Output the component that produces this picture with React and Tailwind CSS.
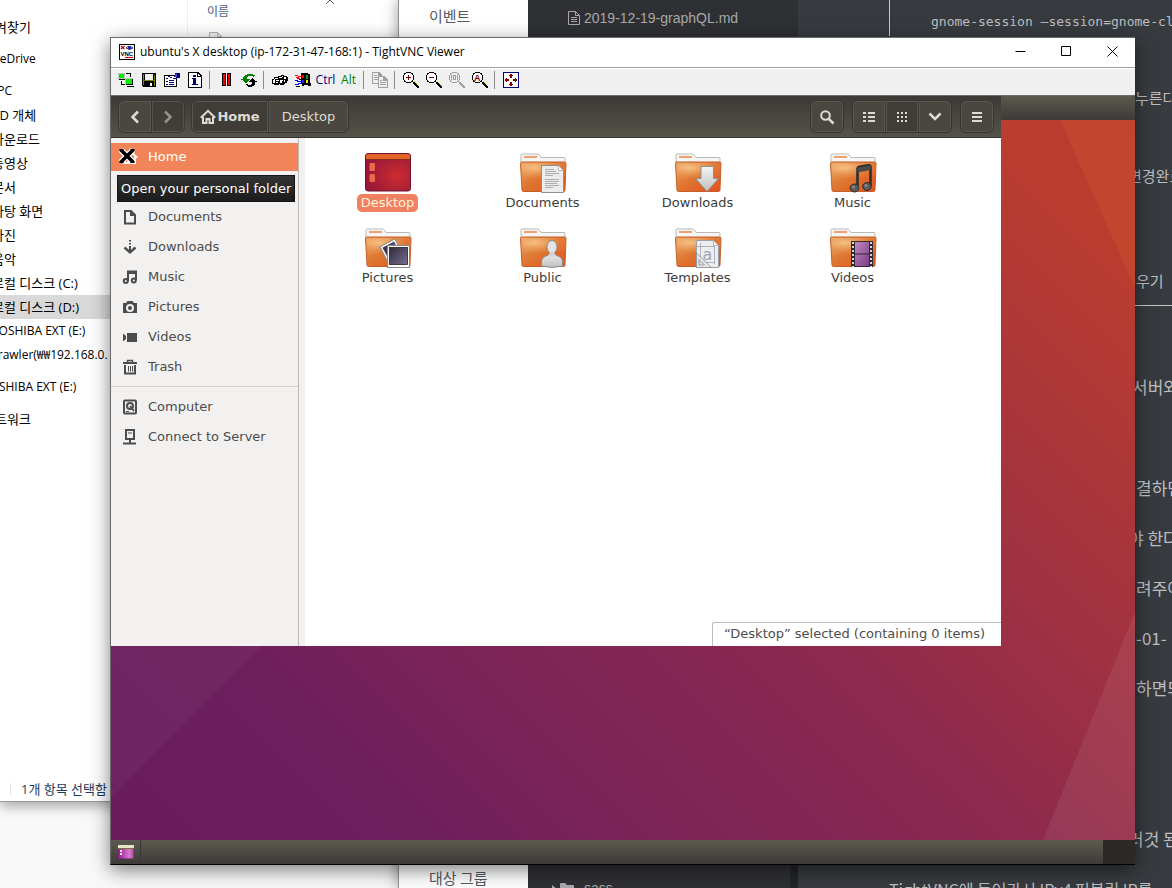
import React from "react";

const WIN = "font-['Open_Sans','Noto_Sans_CJK_KR',sans-serif]";
const KR = "font-['Noto_Sans_CJK_KR',sans-serif]";
const GTK = "font-['DejaVu_Sans',sans-serif]";

/* ---------- toolbar icons, 16x16 pixel style ---------- */

function Pix({ children, size = 16 }) {
  return (
    <svg width={size} height={size} viewBox="0 0 16 16" shapeRendering="crispEdges" aria-hidden="true">
      {children}
    </svg>
  );
}

const VncLogo = () => (
  <svg width="16" height="16" viewBox="0 0 16 16" aria-hidden="true">
    <rect x=".5" y=".5" width="15" height="15" fill="#fff" stroke="#000" />
    <path d="M2 2l3.5 3M5.5 2L2 5" stroke="#c00000" strokeWidth="1.2" />
    <path d="M7 4q3-3.500 7 0q-3.500 3-7 0z" fill="#fff" stroke="#000" strokeWidth=".8" />
    <circle cx="10.500" cy="3.800" r="1.600" fill="#0018c8" />
    <text x="1.500" y="12" fontSize="6" fontWeight="700" fontFamily="Liberation Sans" fill="#000">VNC</text>
    <path d="M6 13.500h8" stroke="#e00000" strokeWidth="1.200" />
  </svg>
);

const ConnectIcon = () => (
  <Pix>
    <path d="M0 1h7v6H0z" fill="#c0c0c0" />
    <path d="M1 2h5v4H1zM8 7h6v5H8z" fill="#00f000" />
    <path d="M8 1h5v1H8zM12 2h1v3h-1zM3 9h1v4H3zM4 12h3v1H4zM1 7h6v1H1z" fill="#000" />
    <path d="M7 6h8v1H7zM7 7h1v6H7z" fill="#c0c0c0" />
    <path d="M14 7h1v6h-1zM8 12h6v1H8zM9 14h7v1H9z" fill="#000" />
  </Pix>
);
const SaveIcon = () => (
  <Pix>
    <path d="M1 1h14v14H2l-1-1z" fill="#000" />
    <path d="M2 2h1v11H2zM13 3h1v11h-1zM3 8h10v1H3z" fill="#808000" />
    <path d="M4 2h8v6H4z" fill="#efefef" />
    <path d="M9 11h2v3H9z" fill="#fff" />
  </Pix>
);
const PropsIcon = () => (
  <Pix>
    <path d="M0 3h13v12H0z" fill="#000" />
    <path d="M1 4h11v10H1z" fill="#fff" />
    <path d="M2 6h2v1H2zM2 9h2v1H2zM2 12h2v1H2zM5 8h5v1H5zM5 10h5v1H5zM5 12h5v1H5z" fill="#00007f" />
    <path d="M4 4h5v-1h2V1h5v5h-3v1H9V6H6V5H4z" fill="#00007f" />
    <path d="M6 4h4v1H6zM8 5h4v1H8z" fill="#fff" />
    <path d="M11 2h2v3h-2z" fill="#4a4ab0" />
  </Pix>
);
const InfoIcon = () => (
  <Pix>
    <path d="M1 0h10l4 4v12H1z" fill="#000" />
    <path d="M2 1h8v4h4v10H2z" fill="#fff" />
    <path d="M11 2v2h2z" fill="#fff" />
    <path d="M6 3h3v2H6zM5 6h4v6h2v1H5v-1h1V7H5z" fill="#00007f" />
  </Pix>
);
const PauseIcon = () => (
  <Pix>
    <path d="M4 1h4v13H4zM9 1h4v13H9z" fill="#000" />
    <path d="M5 2h2v11H5zM10 2h2v11h-2z" fill="#f00" />
  </Pix>
);
const RefreshIcon = () => (
  <Pix>
    <path d="M0 7h2V5h1V4h1V3h2V2h6v1h2v1h-1v1h-1V4H7v1H6v2h3v1H8v1H7v1H6v1H4v-1H3V9H2V8H0z" fill="#008000" />
    <path d="M16 9h-2V8h-1V7h-1V6h-1v1h-1v1H9v1H8v1h3v2h-1v1H7v-1H5v1h1v1h1v1h4v-1h2v-1h1v-3h2z" fill="#000" />
  </Pix>
);
const BinocularsIcon = () => (
  <Pix>
    <path d="M2 5h4V4h3V3h3v1h3v1h1v4h-1v2h-2v1h-1v1H8v-1H7v1H2v-1H0V7h2z" fill="#000" />
    <path d="M3 6h3v1H3zM2 7h1v1H2zM1 8h2v3H1zM4 8h3v1H4zM4 10h2v1H4zM7 5h3v1H7zM8 8h3v1H8zM8 9h2v2H8zM12 8h1v2h-1zM12 5h2v2h-2zM10 4h1v1h-1z" fill="#fff" />
  </Pix>
);
const FlagIcon = () => (
  <Pix>
    <path d="M6 1h7v1h2v9h1v3h-3v-1H9v1H7v-2H6z" fill="#000" />
    <path d="M0 3h3v1H0zM1 5h3v1H1zM3 4h4v1H3z" fill="#f00" />
    <path d="M0 8h3v1H0zM2 9h4v1H2zM0 12h4v1H0zM3 11h3v1H3z" fill="#00f" />
    <path d="M2 6h3v1H2zM7 3h2v3H7z" fill="#f00" />
    <path d="M11 3h2v4h-2z" fill="#00a000" />
    <path d="M7 8h2v3H7z" fill="#2020ff" />
    <path d="M11 8h2v3h-2z" fill="#f8e000" />
    <path d="M1 14h4v1H1zM4 7h2v1H4z" fill="#000" />
  </Pix>
);
const CopyIcon = () => (
  <Pix>
    <path d="M0 0h7l3 3v9H0z" fill="#a0a0a0" />
    <path d="M1 1h5v3h3v7H1z" fill="#efefef" />
    <path d="M2 3h3v1H2zM2 5h5v1H2zM2 7h4v1H2z" fill="#a0a0a0" />
    <path d="M6 4h6l4 4v8H6z" fill="#a0a0a0" />
    <path d="M7 5h4v4h4v6H7z" fill="#efefef" />
    <path d="M8 8h2v1H8zM8 10h6v1H8zM8 12h6v1H8z" fill="#a0a0a0" />
  </Pix>
);

function Magnifier({ gray = false, children }) {
  const edge = gray ? "#a0a0a0" : "#000";
  return (
    <Pix>
      <path d="M3 0h5v1H3zM1 1h2v2H1zM8 1h2v2H8zM0 3h1v5H0zM10 3h1v5h-1zM1 8h2v2H1zM3 10h5v1H3zM8 8h2v2H8z" fill={edge} />
      <path d="M3 1h5v1h1v1h1v5H9v1H8v1H3V9H2V8H1V3h1V2h1z" fill={gray ? "#efefef" : "#fff"} />
      <path d="M10 10h2v1h1v1h1v1h1v1h1v2h-2v-1h-1v-1h-1v-1h-1v-1h-1z" fill={edge} />
      {!gray && <path d="M11 9h1v1h1v1h-1v-1h-1zM13 11h1v1h-1z" fill="#e8e000" />}
      {children}
    </Pix>
  );
}
const ZoomInIcon = () => (
  <Magnifier><path d="M3 5h5v1H3zM5 3h1v5H5z" fill="#800000" /></Magnifier>
);
const ZoomOutIcon = () => (
  <Magnifier><path d="M3 5h5v1H3z" fill="#800000" /></Magnifier>
);
const ZoomFullIcon = () => (
  <Magnifier gray>
    <path d="M2 3h1v5H2zM4 3h3v1H4zM4 7h3v1H4zM4 3h1v5H4zM6 3h1v5H6zM8 3h1v5H8z" fill="#a0a0a0" />
  </Magnifier>
);
const ZoomAutoIcon = () => (
  <Magnifier>
    <text x="2" y="9" fontSize="9" fontWeight="700" fontFamily="Liberation Sans" fill="#800000">A</text>
  </Magnifier>
);
const FullscreenIcon = () => (
  <Pix>
    <rect x=".5" y=".5" width="15" height="15" fill="#fff" stroke="#000080" />
    <path d="M7 2h2v1h1v1H9v2H7V4H6V3h1zM7 14h2v-1h1v-1H9v-2H7v2H6v1h1zM2 7v2h1v1h1V9h2V7H4V6H3v1zM14 7v2h-1v1h-1V9h-2V7h2V6h1v1z" fill="#800000" />
  </Pix>
);

const TOOLS = [
  ["New connection", <ConnectIcon />],
  ["Save session", <SaveIcon />],
  ["Connection options", <PropsIcon />],
  ["Connection info", <InfoIcon />],
  null,
  ["Pause", <PauseIcon />],
  ["Refresh", <RefreshIcon />],
  null,
  ["Send Ctrl-Alt-Del", <BinocularsIcon />],
  ["Send Win key", <FlagIcon />],
  ["Ctrl", <span className="text-[#00007f]">Ctrl</span>],
  ["Alt", <span className="text-[#008000]">Alt</span>],
  null,
  ["Transfer files", <CopyIcon />],
  null,
  ["Zoom in", <ZoomInIcon />],
  ["Zoom out", <ZoomOutIcon />],
  ["Zoom 100%", <ZoomFullIcon />],
  ["Zoom auto", <ZoomAutoIcon />],
  null,
  ["Full screen", <FullscreenIcon />],
];

/* ---------- sidebar symbols ---------- */

function Sym({ children }) {
  return (
    <svg width="16" height="16" viewBox="0 0 16 16" fill="none" stroke="currentColor" strokeWidth="2" className="shrink-0" aria-hidden="true">
      {children}
    </svg>
  );
}
const HomeSym = () => (
  <Sym>
    <path d="M.8 8.700L8 1.800l7.200 6.900" />
    <path d="M3 8v6h3.500v-4h3v4H13V8" />
  </Sym>
);
/* A null entry keeps the row that the tooltip lies over. */
const PLACES = [
  ["Home", <HomeSym />],
  null,
  ["Documents", <Sym><path d="M3 2h6l4 4v8.500H3z" /><path d="M8 2v5h5z" fill="currentColor" stroke="none" /></Sym>],
  ["Downloads", <Sym><path d="M8 1v1.500M8 4v1.500M8 7v6" /><path d="M2.500 8.500L8 13.300l5.500-4.800" strokeWidth="2.400" /></Sym>],
  ["Music", (
    <Sym>
      <path d="M6 12V2.500h8V11" />
      <path d="M6 4h8" />
      <circle cx="3.800" cy="12" r="2" />
      <circle cx="11.800" cy="11.500" r="2" />
    </Sym>
  )],
  ["Pictures", (
    <Sym>
      <path fillRule="evenodd" d="M1 4h3l1.500-2h5L12 4h3v10H1zM8 5a4 4 0 100 8 4 4 0 000-8z" fill="currentColor" stroke="none" />
      <circle cx="8" cy="9" r="2" fill="currentColor" stroke="none" />
    </Sym>
  )],
  ["Videos", <Sym><path d="M5 4h10v9H5zM1 4.500L4 7v3l-3 2.500z" fill="currentColor" stroke="none" /></Sym>],
  ["Trash", (
    <Sym>
      <path d="M1 4h14" />
      <path d="M5.500 3V1.500h5V3" strokeWidth="1.400" />
      <path d="M3 6v8.500h10V6" />
      <path d="M6.500 7v5.500M8.500 7v5.500M10.500 7v5.500" strokeWidth="1" />
    </Sym>
  )],
];
const DEVICES = [
  ["Computer", (
    <Sym>
      <rect x="2" y="1.500" width="12" height="13" rx="1" />
      <circle cx="8" cy="7" r="3" />
      <path d="M8 7l4 5" />
      <path d="M4 12.500h3" strokeWidth="1" />
    </Sym>
  )],
  ["Connect to Server", (
    <Sym>
      <path d="M4 1h8v9H4z" />
      <path d="M6 4h4" strokeWidth="1" />
      <path d="M8 10v4M1 14.500h13" />
    </Sym>
  )],
];

/* ---------- folder icons, 48x42 ---------- */

function Folder({ children }) {
  return (
    <svg width="48" height="42" viewBox="0 0 48 42" aria-hidden="true">
      <path d="M2 14V4q0-1 1-1h15.500q1 0 1.500.8l2 2.700H45q1 0 1 1V14z" fill="#f6f6f4" stroke="#b9b9b7" />
      <path d="M5 5h13v2H5z" fill="#f0a070" />
      <path d="M1.500 12.500q0-1.500 1.500-1.500h42.500q1.500 0 1.500 1.500L46 39q0 1.500-1.500 1.500h-40Q3 40.500 3 39z" fill="url(#folderBody)" stroke="#c4602c" />
      <path d="M2.500 12h44l-.4 12Q24 27 3 28z" fill="url(#folderGlow)" />
      {children}
    </svg>
  );
}
const Defs = () => (
  <svg width="0" height="0" className="absolute" aria-hidden="true">
    <defs>
      <linearGradient id="folderBody" x1="0" y1="0" x2="1" y2="1">
        <stop offset="0" stopColor="#e9a05c" />
        <stop offset=".5" stopColor="#de7430" />
        <stop offset="1" stopColor="#e4501c" />
      </linearGradient>
      <radialGradient id="folderGlow" cx=".3" cy=".3" r=".6">
        <stop offset="0" stopColor="#fbd9a0" stopOpacity=".7" />
        <stop offset="1" stopColor="#f6b070" stopOpacity=".1" />
      </radialGradient>
      <linearGradient id="metal" x1="0" y1="0" x2="0" y2="1">
        <stop offset="0" stopColor="#f4f4f4" />
        <stop offset="1" stopColor="#c0c0c0" />
      </linearGradient>
      <radialGradient id="deskRed" cx=".7" cy=".6" r=".7">
        <stop offset="0" stopColor="#cc2c30" />
        <stop offset="1" stopColor="#961838" />
      </radialGradient>
      <linearGradient id="photo" x1="0" y1="0" x2="1" y2="1">
        <stop offset="0" stopColor="#2e2a3c" />
        <stop offset="1" stopColor="#7a6e90" />
      </linearGradient>
      <linearGradient id="film" x1="0" y1="0" x2="1" y2="1">
        <stop offset="0" stopColor="#c088c0" />
        <stop offset="1" stopColor="#7c3c88" />
      </linearGradient>
      <linearGradient id="mini" x1="0" y1="0" x2="1" y2="0">
        <stop offset="0" stopColor="#8c2090" />
        <stop offset=".7" stopColor="#d878c8" />
        <stop offset="1" stopColor="#b048a8" />
      </linearGradient>
    </defs>
  </svg>
);

const ITEMS = [
  ["Desktop", (
    <svg width="48" height="42" viewBox="0 0 48 42" aria-hidden="true">
      <rect x="1.500" y="2.500" width="45" height="37.500" rx="2.500" fill="url(#deskRed)" stroke="#6e1230" />
      <path d="M2 8V5q0-2 2-2h40q2 0 2 2v3z" fill="#df6426" />
      <path d="M2 8.500h44" stroke="#8c2a20" />
      <rect x="5.500" y="12" width="5.500" height="8" rx="1" fill="#ea6a48" />
      <rect x="5.500" y="23" width="5.500" height="8" rx="1" fill="#ea6a48" />
    </svg>
  )],
  ["Documents", (
    <Folder>
      <path d="M22.500 14.500h17l5 5v22h-22z" fill="#ececec" stroke="#8e8e8e" />
      <path d="M39.500 14.500v5h5z" fill="#fff" stroke="#a0a0a0" strokeWidth=".7" />
      <path d="M26 18.500h9M26 20.500h11M26 22.500h14M26 24.500h8M26 28.500h14M26 30.500h14M26 32.500h12M26 34.500h14M26 36.500h8" stroke="#9c9c9c" strokeWidth=".8" />
    </Folder>
  )],
  ["Downloads", (
    <Folder>
      <path d="M27 15.500h12.500v12h5L33 40.500 21.500 27.500H27z" fill="url(#metal)" stroke="#8e8e8e" />
    </Folder>
  )],
  ["Music", (
    <Folder>
      <path d="M28.500 37V18q0-2 2-2.300l9-1.500q2-.2 2 1.500V35" fill="none" stroke="#2f2f2f" strokeWidth="2.600" />
      <path d="M28.500 21.500l13-2.500v-4.500l-13 2z" fill="#4a4a4a" />
      <ellipse cx="25.500" cy="37" rx="4.300" ry="4" fill="#5a5a5a" stroke="#2c2c2c" />
      <ellipse cx="38" cy="35.500" rx="4.300" ry="4" fill="#5a5a5a" stroke="#2c2c2c" />
      <circle cx="24.500" cy="36" r="1.500" fill="#8c8c8c" />
      <circle cx="37" cy="34.500" r="1.500" fill="#8c8c8c" />
    </Folder>
  )],
  ["Pictures", (
    <Folder>
      <g transform="rotate(-28 26 24)">
        <rect x="18.500" y="16.500" width="17" height="17" fill="#f4f4f4" stroke="#888" />
        <rect x="20.500" y="18.500" width="13" height="12" fill="url(#photo)" />
      </g>
      <rect x="23.500" y="19.500" width="22" height="22" fill="#fafafa" stroke="#888" />
      <rect x="25.500" y="21.500" width="18" height="17" fill="url(#photo)" stroke="#222" strokeWidth=".8" />
    </Folder>
  )],
  ["Public", (
    <Folder>
      <path d="M22.500 40v-4q0-5 6-6.500l2-1.500v-3h5v3l2 1.500q6 1.500 6 6.500v4q-10.500 3-21 0z" fill="url(#metal)" stroke="#8e8e8e" />
      <ellipse cx="33" cy="21" rx="5" ry="6.500" fill="#e4e4e4" stroke="#8e8e8e" />
      <path d="M30.500 26.500h5v4h-5z" fill="#d4d4d4" />
    </Folder>
  )],
  ["Templates", (
    <Folder>
      <path d="M22.500 14.500h17l5 5v22h-22z" fill="#eceef0" stroke="#9aa0a4" />
      <path d="M39.500 14.500v5h5z" fill="#fff" stroke="#a0a0a0" strokeWidth=".7" />
      <path d="M23 20.500h17M23 36.500h17M26.500 17v23M40.500 20v18" stroke="#9ea2b0" strokeWidth=".8" />
      <text x="28.500" y="34" fontSize="16" fontFamily="DejaVu Sans" fill="#a2a6b2">a</text>
      <path d="M22.500 27l15 14.500h-15z" fill="#e2e4e6" fillOpacity=".8" stroke="#8e9296" strokeWidth=".8" />
      <path d="M25 33.500v5.500h5.500z" fill="none" stroke="#8e9296" strokeWidth=".8" />
    </Folder>
  )],
  ["Videos", (
    <Folder>
      <path d="M22 15h22v26H22z" fill="#2e2a30" />
      <path d="M26 16h14v11.500H26zM26 28.500h14V40H26z" fill="url(#film)" />
      <path d="M24 16v25M42 16v25" stroke="#d8d0d8" strokeWidth="2" strokeDasharray="2 2" />
    </Folder>
  )],
];

/* ---------- background windows ---------- */

const NAV_GROUPS = [
  [["즐겨찾기", 0]],
  [["OneDrive", 0]],
  [
    ["내 PC", 0], ["3D 개체", 1], ["다운로드", 1], ["동영상", 1], ["문서", 1], ["바탕 화면", 1],
    ["사진", 1], ["음악", 1], ["로컬 디스크 (C:)", 1], ["로컬 디스크 (D:)", 1, true],
    ["TOSHIBA EXT (E:)", 1], ["crawler(₩₩192.168.0.", 1],
  ],
  [["TOSHIBA EXT (E:)", 0]],
  [["네트워크", 0]],
];
const isLatin = (label) => /[A-Z]{2}|[a-z]{2}/.test(label);

function Explorer() {
  return (
    <div className="flex w-[398px] shrink-0 flex-col bg-[#f9f9f9] pb-[86px]">
      <div className={`relative flex min-h-0 flex-1 flex-col border-b border-[#9a9a9a] bg-white text-[12px] leading-6 text-black shadow-[0_4px_12px_rgba(0,0,0,0.35)] ${WIN}`}>
        <div className="flex min-h-0 flex-1">
          <nav className="w-[188px] overflow-hidden border-r border-[#f0f0f0] pt-[15px]">
            {NAV_GROUPS.map((group, g) => (
              <ul key={g} className="mb-2">
                {group.map(([label, level, active]) => (
                  <li key={label} className={active ? "bg-[#d9d9d9]" : ""}>
                    <a href="#" className={`block h-6 whitespace-nowrap ${level ? "-ml-2" : "-ml-[17px]"} ${isLatin(label) ? "text-[12px]" : "text-[13px]"}`}>{label}</a>
                  </li>
                ))}
              </ul>
            ))}
          </nav>
          <div className="flex-1 pl-[19px] text-[#4c607a]">
            <div className="flex items-start justify-between pr-[63px]">
              <span>이름</span>
              <svg width="10" height="5" viewBox="0 0 10 5" fill="none" stroke="#555" aria-hidden="true"><path d="M1 0l4 4 4-4" transform="matrix(1 0 0 -1 0 4)" /></svg>
            </div>
            <svg width="13" height="16" viewBox="0 0 13 16" fill="#f4f4f4" stroke="#b0b0b0" className="mt-2 ml-[2px]" aria-hidden="true">
              <path d="M.5.5h8l4 4v11H.5zM8.500.5v4h4" />
            </svg>
          </div>
        </div>
        <div className="flex h-6 items-center pl-[10px] text-[13px] text-[#1e395b]">
          <span className="h-3 border-l border-[#e4e4e4] pl-[10px]" />
          1개 항목 선택함
        </div>
      </div>
    </div>
  );
}

function Console() {
  return (
    <div className={`z-10 flex w-[130px] shrink-0 flex-col justify-between border-l border-[#909090] bg-white pt-1 pl-[30px] text-[15px] leading-6 text-[#545b64] shadow-[0_0_14px_rgba(0,0,0,0.4)] ${KR}`}>
      <span>이벤트</span>
      <span className="-mb-[2px]">대상 그룹</span>
    </div>
  );
}

function FileTree() {
  return (
    <div className="z-10 flex w-[270px] shrink-0 flex-col justify-between overflow-hidden bg-[#2f3034] font-['Liberation_Sans',sans-serif] text-[14px] leading-6 text-[#a9a9a9]">
      <div className="flex items-center gap-1 pt-[6px] pl-10">
        <svg width="12" height="14" viewBox="0 0 12 14" fill="none" stroke="#a9a9a9" aria-hidden="true">
          <path d="M.5.5h7l4 4v9H.5zM7.500.5v4h4M3 6.500h6M3 8.500h6M3 10.500h6" />
        </svg>
        2019-12-19-graphQL.md
      </div>
      <div className="-mb-3 flex h-9 items-center border-r-8 border-[#232426] pt-3 pl-6">
        <svg width="22" height="13" viewBox="0 0 22 13" fill="#a9a9a9" className="mr-[10px]" aria-hidden="true">
          <path d="M0 3l5 4-5 4zM8 2q0-1 1-1h4l2 2h6q1 0 1 1v9H8z" />
        </svg>
        sass
      </div>
    </div>
  );
}

const NOTES = [
  ["누른다.", "mt-[37px] -ml-[1px] text-[15px]"],
  ["변경완료", "mt-7 -ml-2 text-[15px]"],
  ["우기", "mt-[55px] text-[15px]"],
];
const NOTES_2 = [
  ["서버와", "mt-14 -ml-1"],
  ["결하면", "mt-[51px]"],
  ["야 한다", "-ml-2"],
  ["려주어", ""],
  ["-01-", ""],
  ["하면되", ""],
  ["러것 된", "mt-[101px] -ml-2"],
];

function Notes() {
  return (
    <div className={`min-w-0 flex-1 overflow-hidden bg-[#373b3f] leading-[50px] whitespace-nowrap text-[#bcbec0] ${KR}`}>
      <pre className="ml-[91px] h-9 border-l border-[#c8c8c8] pt-3 pl-[41px] font-['DejaVu_Sans_Mono','Noto_Sans_CJK_KR',monospace] text-[13px] leading-5">gnome-session –session=gnome-classic &amp;</pre>
      <div className="ml-auto w-9">
        {NOTES.map(([text, cls]) => <p key={text} className={`h-[50px] ${cls}`}>{text}</p>)}
      </div>
      <hr className="-mt-px ml-[91px] border-[#c8c8c8]" />
      <div className="ml-auto w-9 text-[17px]">
        {NOTES_2.map(([text, cls]) => <p key={text} className={`h-[50px] ${cls}`}>{text}</p>)}
      </div>
      <p className="ml-[91px] text-[16px]">TightVNC에 들어가서 IPv4 퍼블릭 IP를</p>
    </div>
  );
}

/* ---------- remote desktop ---------- */

const HDR_BTN = "flex h-[33px] items-center justify-center border border-[#383632] text-[#dfdbd2] shadow-[inset_0_0_0_1px_#5a574f]";

function HeaderBar() {
  return (
    <header className="flex h-[42px] shrink-0 items-center border-b border-[#35332f] bg-linear-to-b from-[#3d3936] to-[#55524a] px-[7px] text-[13px]">
      <div className="flex">
        <button aria-label="Back" className={`w-[34px] rounded-l-md bg-[#4a4741] ${HDR_BTN}`}>
          <svg width="10" height="14" viewBox="0 0 10 14" fill="none" stroke="currentColor" strokeWidth="2.500"><path d="M8 1.500L2.500 7 8 12.500" /></svg>
        </button>
        <button aria-label="Forward" className={`-ml-px w-[34px] rounded-r-md bg-[#3f3c37] opacity-80 ${HDR_BTN}`}>
          <svg width="10" height="14" viewBox="0 0 10 14" fill="none" stroke="#a8a49c" strokeWidth="2.500"><path d="M2 1.500L7.500 7 2 12.500" /></svg>
        </button>
      </div>
      <div className="ml-[6px] flex">
        <button className={`w-[78px] gap-px rounded-l-md bg-[#403d38] font-bold ${HDR_BTN}`}><HomeSym />Home</button>
        <button className={`-ml-px w-[81px] rounded-r-md bg-[#4a4741] ${HDR_BTN}`}>Desktop</button>
      </div>
      <div className="ml-auto flex">
        <button aria-label="Search" className={`w-[34px] rounded-md bg-[#4a4741] ${HDR_BTN}`}>
          <svg width="16" height="16" viewBox="0 0 16 16" fill="none" stroke="currentColor"><circle cx="6.500" cy="6.500" r="4.300" strokeWidth="2" /><path d="M9.800 9.800l4.700 4.700" strokeWidth="2.500" /></svg>
        </button>
        <button aria-label="List view" className={`ml-2 w-[34px] rounded-l-md bg-[#4a4741] ${HDR_BTN}`}>
          <svg width="12" height="12" viewBox="0 0 12 12" fill="currentColor"><path d="M0 1h3v2H0zM5 1h7v2H5zM0 5h3v2H0zM5 5h7v2H5zM0 9h3v2H0zM5 9h7v2H5z" /></svg>
        </button>
        <button aria-label="Icon view" className={`-ml-px w-[34px] bg-[#403d38] ${HDR_BTN}`}>
          <svg width="12" height="12" viewBox="0 0 12 12" fill="currentColor"><path d="M1 1h2v2H1zM5 1h2v2H5zM9 1h2v2H9zM1 5h2v2H1zM5 5h2v2H5zM9 5h2v2H9zM1 9h2v2H1zM5 9h2v2H5zM9 9h2v2H9z" /></svg>
        </button>
        <button aria-label="View options" className={`-ml-px w-[34px] rounded-r-md bg-[#4a4741] ${HDR_BTN}`}>
          <svg width="14" height="9" viewBox="0 0 14 9" fill="none" stroke="currentColor" strokeWidth="2.500"><path d="M1.500 1.500L7 7l5.500-5.500" /></svg>
        </button>
        <button aria-label="Menu" className={`ml-2 w-[34px] rounded-md bg-[#4a4741] ${HDR_BTN}`}>
          <svg width="10" height="10" viewBox="0 0 10 10" fill="currentColor"><path d="M0 0h10v2H0zM0 4h10v2H0zM0 8h10v2H0z" /></svg>
        </button>
      </div>
    </header>
  );
}

const PlaceLink = ({ label, icon, active }) => (
  <li>
    <a href="#" className={`flex h-7 items-center gap-[10px] pl-[11px] ${active ? "bg-[#f18459] text-white" : "text-[#4c4c4c]"}`}>
      {icon}
      {label}
    </a>
  </li>
);

function Nautilus() {
  return (
    <section className={`absolute top-0 right-[134px] bottom-[218px] left-0 flex flex-col bg-[#f2f1f0] ${GTK}`}>
      <HeaderBar />
      <div className="flex min-h-0 flex-1">
        <nav className="relative w-[188px] shrink-0 border-r border-[#bcbab8] pt-[5px] text-[13px]">
          <ul className="flex flex-col gap-[2px]">
            {PLACES.map((place, i) =>
              place ? (
                <PlaceLink key={place[0]} label={place[0]} icon={place[1]} active={i === 0} />
              ) : (
                <li key={i} className="h-7" />
              )
            )}
          </ul>
          <hr className="mt-[5px] mb-[6px] border-[#d4d2d0]" />
          <ul className="flex flex-col gap-[2px]">
            {DEVICES.map(([label, icon]) => <PlaceLink key={label} label={label} icon={icon} />)}
          </ul>
          <svg width="18" height="18" viewBox="0 0 18 18" className="absolute top-[9px] left-[7px]" aria-hidden="true">
            <path d="M3 3l12 12M15 3L3 15" stroke="#fff" strokeWidth="6" />
            <path d="M3 3l12 12M15 3L3 15" stroke="#000" strokeWidth="3.600" />
            <path d="M1.500 3h4M12.500 3h4M1.500 15h4M12.500 15h4" stroke="#000" strokeWidth="2" />
          </svg>
          <div role="tooltip" className="absolute top-[37px] left-[6px] flex h-[27px] items-center border border-[#151515] bg-linear-to-b from-[#343434] to-[#1c1c1c] px-[3px] whitespace-nowrap text-white">
            Open your personal folder
          </div>
        </nav>
        <main className="relative ml-[6px] min-w-0 flex-1 bg-white">
          <ul className="grid grid-cols-[repeat(auto-fill,155px)] pt-[13px] pl-[5px] text-[13px]">
            {ITEMS.map(([label, icon], i) => (
              <li key={label} className="flex h-[75px] flex-col items-center">
                {icon}
                <span className={`mt-px rounded-[5px] px-1 leading-[18px] ${i === 0 ? "bg-[#f08060] text-[#fff3d8]" : "text-[#3c3c3c]"}`}>{label}</span>
              </li>
            ))}
          </ul>
          <p className="absolute right-0 bottom-0 rounded-tl-[3px] border-t border-l border-[#bcbcbc] bg-white pr-4 pb-[2px] pl-[11px] text-[13px] leading-[21px] whitespace-nowrap text-[#4c4c4c]">
            “Desktop” selected (containing 0 items)
          </p>
        </main>
      </div>
    </section>
  );
}

function RemoteDesktop() {
  return (
    <div className="relative flex min-h-0 flex-1 flex-col">
      <div className="h-6 shrink-0 bg-linear-to-b from-[#5c594f] to-[#3d3b37]" />
      <div className="min-h-0 flex-1 bg-[linear-gradient(45deg,#681c5c_0%,#6b1f5c_16%,#7b2359_30%,#8c294e_52%,#9c3044_64%,#b03836_82%,#ba3d2e_92%,#b63b32_100%)]">
        <svg className="h-full w-full" viewBox="0 0 1024 720" preserveAspectRatio="none" aria-hidden="true">
          <path d="M949 0h75v168z" fill="#c84e30" fillOpacity=".55" />
          <path d="M1024 492v228h-92z" fill="#fff" fillOpacity=".07" />
          <path d="M0 526h151L0 678z" fill="#fff" fillOpacity=".03" />
        </svg>
      </div>
      <div className="flex h-6 shrink-0 items-center bg-linear-to-b from-[#5c594f] to-[#3d3b37]">
        <button aria-label="Show desktop" className="flex h-6 w-[30px] items-center justify-center border-r border-[#3a3834]">
          <svg width="16" height="14" viewBox="0 0 16 14" aria-hidden="true">
            <rect y="3" width="16" height="11" rx="1" fill="url(#mini)" stroke="#6a1468" />
            <path d="M0 0h16v3H0z" fill="#e8e4c4" />
            <path d="M0 3.500h16" stroke="#77703c" />
            <path d="M2 5h2v2H2zM2 8h2v2H2z" fill="#f0e0f0" />
          </svg>
        </button>
        <div className="ml-auto h-6 w-8 bg-[#2a2927]" />
      </div>
      <Nautilus />
    </div>
  );
}

function VncViewer() {
  return (
    <section className={`absolute top-[37px] right-[37px] bottom-[23px] left-[110px] z-20 flex flex-col border-t border-b border-l border-t-[#6c6c6c] border-b-black border-l-[#6c6c6c] bg-white text-[12px] text-black shadow-[0_5px_18px_rgba(0,0,0,0.5)] ${WIN}`}>
      <div className="flex h-[29px] shrink-0 items-center pb-[2px] pl-2">
        <VncLogo />
        <h1 className="ml-[5px] whitespace-nowrap">ubuntu&apos;s X desktop (ip-172-31-47-168:1) - TightVNC Viewer</h1>
        <div className="ml-auto flex">
          <button aria-label="Minimize" className="flex h-7 w-[46px] items-center justify-center">
            <svg width="11" height="11" viewBox="0 0 11 11" fill="none" stroke="#000"><path d="M.5 5.500h10" /></svg>
          </button>
          <button aria-label="Maximize" className="flex h-7 w-[46px] items-center justify-center">
            <svg width="11" height="11" viewBox="0 0 11 11" fill="none" stroke="#000"><path d="M.5.5h9v9H.5z" /></svg>
          </button>
          <button aria-label="Close" className="flex h-7 w-[46px] items-center justify-center">
            <svg width="11" height="11" viewBox="0 0 11 11" fill="none" stroke="#000"><path d="M.5.5l10 10M10.500.5l-10 10" /></svg>
          </button>
        </div>
      </div>
      <div className="flex h-[29px] shrink-0 items-center border-t border-b border-t-[#a0a0a0] border-b-[#6c6c6c] bg-[#f0f0f0] pr-2 pb-1 pl-[3px] shadow-[inset_0_1px_0_#fff]">
        {TOOLS.map((tool, i) =>
          tool ? (
            <button key={i} aria-label={tool[0]} className="flex h-[22px] w-[23px] items-center justify-center">{tool[1]}</button>
          ) : (
            <span key={i} className="mx-[3px] h-[18px] w-[2px] border-l border-[#8c8c8c]" />
          )
        )}
      </div>
      <RemoteDesktop />
    </section>
  );
}

export default function App() {
  return (
    <div className="relative flex h-screen w-full overflow-hidden bg-[#f9f9f9]">
      <Defs />
      <Explorer />
      <Console />
      <FileTree />
      <Notes />
      <VncViewer />
    </div>
  );
}
